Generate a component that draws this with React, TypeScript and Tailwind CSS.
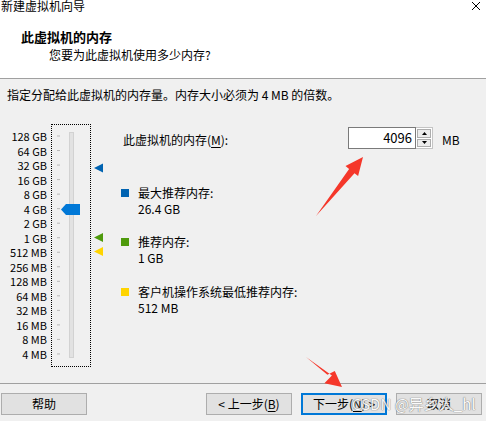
import { ReactNode } from "react";

const LABELS = [
  "128 GB",
  "64 GB",
  "32 GB",
  "16 GB",
  "8 GB",
  "4 GB",
  "2 GB",
  "1 GB",
  "512 MB",
  "256 MB",
  "128 MB",
  "64 MB",
  "32 MB",
  "16 MB",
  "8 MB",
  "4 MB",
];
const STEP = 14.53;

const SliderInner = () => (
  <svg width="38" height="241" className="block">
    {LABELS.map((l, i) => (
      <rect key={l + i} x="5" y={10.5 + i * STEP} width="3" height="1" fill="#b9b9b9" />
    ))}
    <rect x="17.5" y="7.5" width="4" height="225" fill="#e2e2e2" stroke="#d2d2d2" />
    <polygon points="9,84.5 14,79 28,79 28,90 14,90" fill="#0078d7" />
  </svg>
);

const Markers = () => (
  <svg width="14" height="243" className="block shrink-0">
    <polygon points="3,44 12,39.5 12,48.5" fill="#0063b1" />
    <polygon points="3,113.5 12,109 12,118" fill="#4e9a0c" />
    <polygon points="3,127.5 12,123 12,132" fill="#ffd400" />
  </svg>
);

const Legend = ({ color, title, value }: { color: string; title: string; value: string }) => (
  <div className="flex gap-[9px]">
    <div className={`w-[8px] h-[8px] mt-[4px] ${color}`} />
    <div className="leading-[16px]">
      <div>{title}</div>
      <div>{value}</div>
    </div>
  </div>
);

const Btn = ({ children, primary }: { children: ReactNode; primary?: boolean }) => (
  <div
    className={`w-[86px] h-[22px] flex items-center justify-center bg-[#e1e1e1] leading-[16px] ${
      primary ? "border-2 border-[#0078d7]" : "border border-[#adadad]"
    }`}
  >
    {children}
  </div>
);

const App = () => {
  return (
    <div className="relative w-[486px] h-[421px] overflow-hidden bg-[#f0f0f0] text-black text-[12px] font-['Noto_Sans_CJK_SC',sans-serif]">
      {/* header */}
      <div className="h-[79px] bg-white border-b border-[#a0a0a0]">
        <div className="flex justify-between h-[12px]">
          <div className="leading-[12px] pl-[1px]">新建虚拟机向导</div>
          <svg width="10" height="10" className="mt-[1px] mr-[5px]">
            <path d="M1 1 L9 9 M9 1 L1 9" stroke="#000" strokeWidth="1" />
          </svg>
        </div>
        <div className="mt-[17px] pl-[21px] leading-[16px] text-[13px] font-bold">此虚拟机的内存</div>
        <div className="mt-[2px] pl-[49px] leading-[16px]">您要为此虚拟机使用多少内存?</div>
      </div>

      {/* main */}
      <div className="h-[304px] pt-[8px]">
        <div className="pl-[7px] leading-[16px]">
          指定分配给此虚拟机的内存量。内存大小必须为 4 MB 的倍数。
        </div>
        <div className="mt-[21px] flex items-start">
          <div className="w-[47px] pt-[5px] text-[11px] text-right">
            {LABELS.map((l) => (
              <div key={l} className="h-[14.53px] leading-[14.53px]">
                {l}
              </div>
            ))}
          </div>
          <div className="ml-[4px] w-[40px] h-[243px] border border-dotted border-black">
            <SliderInner />
          </div>
          <Markers />
          <div className="flex-1 pl-[16px] flex flex-col">
            <div className="mt-[3px] flex items-start">
              <div className="ml-[2px] w-[225px] mt-[5px] leading-[16px]">
                此虚拟机的内存(<u className="underline-offset-2">M</u>):
              </div>
              <div className="w-[85px] h-[22px] flex">
                <div className="flex-1 bg-white border border-[#7a7a7a] flex items-center justify-end pr-[3px] text-[13px]">
                  4096
                </div>
                <div className="w-[17px] bg-white border border-[#c4c4c4] border-l-0 flex flex-col gap-[1px] p-[1px]">
                  <div className="flex-1 border border-[#adadad] bg-[#ececec] flex items-center justify-center">
                    <svg width="5" height="3">
                      <polygon points="2.5,0 5,3 0,3" fill="#000" />
                    </svg>
                  </div>
                  <div className="flex-1 border border-[#adadad] bg-[#ececec] flex items-center justify-center">
                    <svg width="5" height="3">
                      <polygon points="0,0 5,0 2.5,3" fill="#000" />
                    </svg>
                  </div>
                </div>
              </div>
              <div className="ml-[9px] mt-[5px] leading-[16px]">MB</div>
            </div>
            <div className="mt-[36px]">
              <Legend color="bg-[#0063b1]" title="最大推荐内存:" value="26.4 GB" />
            </div>
            <div className="mt-[17px]">
              <Legend color="bg-[#4e9a0c]" title="推荐内存:" value="1 GB" />
            </div>
            <div className="mt-[18px]">
              <Legend color="bg-[#ffd400]" title="客户机操作系统最低推荐内存:" value="512 MB" />
            </div>
          </div>
        </div>
      </div>

      {/* footer */}
      <div className="border-t border-[#a0a0a0] pt-[9px] pl-[1px] pr-[4px] flex gap-[9px]">
        <Btn>帮助</Btn>
        <div className="ml-auto">
          <Btn>
            &lt; 上一步(<u className="underline-offset-2">B</u>)
          </Btn>
        </div>
        <Btn primary>
          下一步(<u className="underline-offset-2">N</u>) &gt;
        </Btn>
        <Btn>取消</Btn>
      </div>

      {/* annotations */}
      <svg width="486" height="421" className="absolute inset-0 pointer-events-none">
        <polygon
          points="316,216 349.1,168.9 345.5,166.1 363,157 358.1,176.1 354.5,173.3"
          fill="#f5372a"
        />
        <polygon
          points="306,357 331.9,375.6 324.4,383.3 342,387 334.8,371.1 327.4,374.8"
          fill="#f5372a"
        />
      </svg>
      <div className="absolute left-[352px] top-[393px] text-[15px] leading-[22px] text-white [text-shadow:0_0_1px_#6a6a6a,0_0_1px_#6a6a6a] opacity-85 pointer-events-none whitespace-nowrap">
        CSDN @异乡人_hl
      </div>
    </div>
  );
};

export default App;
